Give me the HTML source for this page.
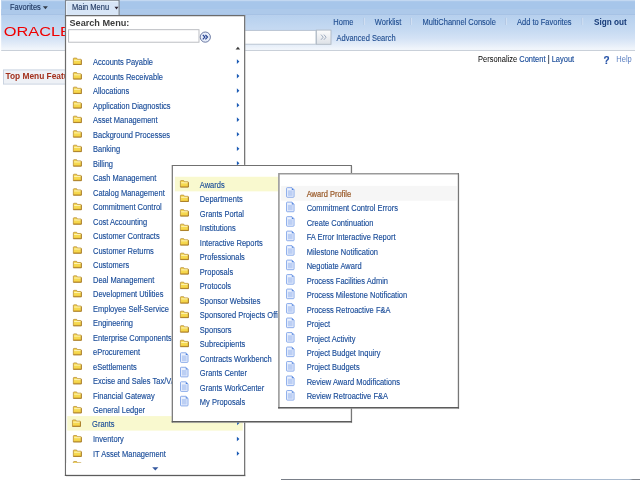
<!DOCTYPE html>
<html><head><meta charset="utf-8"><title>Main Menu</title>
<style>
html,body{margin:0;padding:0;background:#fff;}
body{filter:blur(0.3px);width:640px;height:480px;position:relative;overflow:hidden;font-family:"Liberation Sans",Arial,sans-serif;font-size:7.5px;color:#174a98;}
div,span,a{position:absolute;white-space:nowrap;box-sizing:border-box;}
.layer{position:absolute;left:0;top:0;overflow:hidden}
.t{line-height:15px;height:15px;color:#174a98;transform:scaleY(1.1);transform-origin:0 10px;-webkit-text-stroke:0.12px #174a98;}
.nav{color:#1c4a8e;-webkit-text-stroke:0.1px #1c4a8e;}
.tab{color:#1f3760;-webkit-text-stroke:0.12px #1f3760;}
</style></head><body>

<svg class="layer" width="640" height="480" viewBox="0 0 640 480">
<defs><linearGradient id="hg" x1="0" y1="0" x2="0" y2="1"><stop offset="0" stop-color="#b6d0ee"/><stop offset="0.43" stop-color="#c6daf2"/><stop offset="0.66" stop-color="#d3e2f5"/><stop offset="0.83" stop-color="#e3ecf8"/><stop offset="0.95" stop-color="#eff4fb"/><stop offset="1" stop-color="#f2f6fb"/></linearGradient><linearGradient id="bg" x1="0" y1="0" x2="0" y2="1"><stop offset="0" stop-color="#fcfcfc"/><stop offset="1" stop-color="#dde1e7"/></linearGradient><linearGradient id="sg" x1="0" y1="0" x2="1" y2="0"><stop offset="0" stop-color="#686e78"/><stop offset="0.45" stop-color="#7d8796"/><stop offset="0.8" stop-color="#9db0c8"/><stop offset="0.97" stop-color="#a3b6cc"/><stop offset="0.98" stop-color="#6f7680"/><stop offset="1" stop-color="#6f7680"/></linearGradient></defs>
<rect x="1.2" y="0" width="633.8" height="15.3" fill="#a7c6ea"/>
<rect x="1.2" y="0" width="633.8" height="1.2" fill="#c3d8f1"/>
<rect x="1.2" y="9" width="633.8" height="6" fill="#adc9ea"/>
<rect x="1.2" y="14.7" width="633.8" height="0.8" fill="#97b4da"/>
<rect x="1.2" y="15.3" width="633.8" height="34.7" fill="url(#hg)"/>
<rect x="1.2" y="50" width="633.8" height="1" fill="#c9d0d9"/>
<path d="M42.9 6.3 h5 l-2.5 3 Z" fill="#333c4a"/>
<rect x="200.5" y="30.4" width="115.5" height="13.8" fill="#fff" stroke="#b5c0ce" stroke-width="0.9"/>
<rect x="316.4" y="30.1" width="14.6" height="14.2" fill="url(#bg)" stroke="#b0b9c4" stroke-width="0.9"/>
<path d="M321 34.6 l2.2 2.6 l-2.2 2.6 M323.9 34.6 l2.2 2.6 l-2.2 2.6" fill="none" stroke="#8a9ab3" stroke-width="0.8"/>
<rect x="363.6" y="17.8" width="0.7" height="7.2" fill="#a9bedb"/><rect x="364.3" y="17.8" width="0.7" height="7.2" fill="#dbe6f5"/>
<rect x="410.5" y="17.8" width="0.7" height="7.2" fill="#a9bedb"/><rect x="411.2" y="17.8" width="0.7" height="7.2" fill="#dbe6f5"/>
<rect x="505.2" y="17.8" width="0.7" height="7.2" fill="#a9bedb"/><rect x="505.9" y="17.8" width="0.7" height="7.2" fill="#dbe6f5"/>
<rect x="581.6999999999999" y="17.8" width="0.7" height="7.2" fill="#a9bedb"/><rect x="582.4" y="17.8" width="0.7" height="7.2" fill="#dbe6f5"/>
<rect x="3.5" y="69.9" width="90" height="14.2" fill="#eef1f6" stroke="#c6d0de" stroke-width="0.9"/>
<rect x="281" y="479.1" width="359" height="0.9" fill="url(#sg)"/>
<text x="3.8" y="36" font-family="Liberation Sans, Arial, sans-serif" font-size="11.9" fill="#f00000" textLength="67.2" lengthAdjust="spacingAndGlyphs">ORACLE</text>
</svg>
<div class="t tab" style="left:10px;top:0px">Favorites</div>
<div class="t nav" style="left:333.3px;top:15px">Home</div>
<div class="t nav" style="left:374.8px;top:15px">Worklist</div>
<div class="t nav" style="left:422.5px;top:15px">MultiChannel Console</div>
<div class="t nav" style="left:517px;top:15px">Add to Favorites</div>
<div class="t nav" style="left:594px;top:15px;font-weight:bold;font-size:8.2px;color:#163a78;transform:none;-webkit-text-stroke:0">Sign out</div>
<div class="t nav" style="left:336.5px;top:31px">Advanced Search</div>
<div class="t " style="left:478px;top:52px"><span style="position:static;color:#000;-webkit-text-stroke:0">Personalize </span>Content<span style="position:static;color:#000"> | </span>Layout</div>
<div class="t " style="left:603.6px;top:53px;font-weight:bold;font-size:10px;color:#2450a8">?</div>
<div class="t " style="left:616.3px;top:52px;color:#5b7fc0;-webkit-text-stroke:0">Help</div>
<div class="t " style="left:5.5px;top:69px;font-weight:bold;font-size:8.35px;color:#a3301c;-webkit-text-stroke:0;transform:none">Top Menu Features Description</div>
<svg class="layer" width="640" height="480" viewBox="0 0 640 480">
<rect x="65.5" y="0.35" width="53.6" height="16" fill="#d7e5f6" stroke="#7f858d" stroke-width="1.1"/>
<path d="M66.6 15 V1.3 H118" fill="none" stroke="#eef5fd" stroke-width="0.8"/>
<path d="M114.5 6.8 h4 l-2 2.8 Z" fill="#2a2230"/>
<rect x="65.90" y="16.20" width="179.70" height="460.50" fill="#000" opacity="0.13"/><rect x="64.90" y="15.00" width="180.30" height="461.10" fill="#fff"/><path d="M65.50 476.10 V15.60 H245.20" fill="none" stroke="#6c6c6c" stroke-width="1.2"/><path d="M244.60 15.00 V476.10" stroke="#777" stroke-width="1.2"/><path d="M64.90 475.40 H245.20" stroke="#5c5c5c" stroke-width="1.4"/>
<rect x="68.6" y="29.7" width="130.4" height="12.5" fill="#fff" stroke="#b4b7bc" stroke-width="0.9"/>
<g transform="translate(199.3 31.1)"><circle cx="6" cy="6" r="5.1" fill="#e9effb" stroke="#5b6b98" stroke-width="0.9"/><path d="M3.5 3.7 L5.6 6 L3.5 8.3 M6.1 3.7 L8.2 6 L6.1 8.3" fill="none" stroke="#2a4694" stroke-width="1.25"/></g>
<path d="M235.6 49.5 h4.6 l-2.3 -2.8 Z" fill="#3a3a3a"/>
<path d="M152.2 467.2 h6.2 l-3.1 3.3 Z" fill="#35589f"/>
<g transform="translate(72.95 57.70)"><path d="M0.4 1.0 Q0.4 0.4 1.0 0.4 L3.7 0.4 L4.4 1.6 L7.8 1.6 Q8.4 1.6 8.4 2.2 L8.4 6.8 L0.4 6.8 Z" fill="#f6d94f" stroke="#b58a36" stroke-width="0.75"/><path d="M1.2 2.6 H7.6" stroke="#fff6c4" stroke-width="0.9"/><path d="M0.9 6.1 H7.9" stroke="#ecc238" stroke-width="0.8"/><path d="M0.4 6.8 H8.4 V2.2" fill="none" stroke="#a17623" stroke-width="0.75"/></g>
<path transform="translate(236.70 59.30)" d="M0.2 0 L2.7 2.3 L0.2 4.6 Z" fill="#1b5bb5"/>
<g transform="translate(72.95 72.22)"><path d="M0.4 1.0 Q0.4 0.4 1.0 0.4 L3.7 0.4 L4.4 1.6 L7.8 1.6 Q8.4 1.6 8.4 2.2 L8.4 6.8 L0.4 6.8 Z" fill="#f6d94f" stroke="#b58a36" stroke-width="0.75"/><path d="M1.2 2.6 H7.6" stroke="#fff6c4" stroke-width="0.9"/><path d="M0.9 6.1 H7.9" stroke="#ecc238" stroke-width="0.8"/><path d="M0.4 6.8 H8.4 V2.2" fill="none" stroke="#a17623" stroke-width="0.75"/></g>
<path transform="translate(236.70 73.82)" d="M0.2 0 L2.7 2.3 L0.2 4.6 Z" fill="#1b5bb5"/>
<g transform="translate(72.95 86.73)"><path d="M0.4 1.0 Q0.4 0.4 1.0 0.4 L3.7 0.4 L4.4 1.6 L7.8 1.6 Q8.4 1.6 8.4 2.2 L8.4 6.8 L0.4 6.8 Z" fill="#f6d94f" stroke="#b58a36" stroke-width="0.75"/><path d="M1.2 2.6 H7.6" stroke="#fff6c4" stroke-width="0.9"/><path d="M0.9 6.1 H7.9" stroke="#ecc238" stroke-width="0.8"/><path d="M0.4 6.8 H8.4 V2.2" fill="none" stroke="#a17623" stroke-width="0.75"/></g>
<path transform="translate(236.70 88.33)" d="M0.2 0 L2.7 2.3 L0.2 4.6 Z" fill="#1b5bb5"/>
<g transform="translate(72.95 101.25)"><path d="M0.4 1.0 Q0.4 0.4 1.0 0.4 L3.7 0.4 L4.4 1.6 L7.8 1.6 Q8.4 1.6 8.4 2.2 L8.4 6.8 L0.4 6.8 Z" fill="#f6d94f" stroke="#b58a36" stroke-width="0.75"/><path d="M1.2 2.6 H7.6" stroke="#fff6c4" stroke-width="0.9"/><path d="M0.9 6.1 H7.9" stroke="#ecc238" stroke-width="0.8"/><path d="M0.4 6.8 H8.4 V2.2" fill="none" stroke="#a17623" stroke-width="0.75"/></g>
<path transform="translate(236.70 102.85)" d="M0.2 0 L2.7 2.3 L0.2 4.6 Z" fill="#1b5bb5"/>
<g transform="translate(72.95 115.76)"><path d="M0.4 1.0 Q0.4 0.4 1.0 0.4 L3.7 0.4 L4.4 1.6 L7.8 1.6 Q8.4 1.6 8.4 2.2 L8.4 6.8 L0.4 6.8 Z" fill="#f6d94f" stroke="#b58a36" stroke-width="0.75"/><path d="M1.2 2.6 H7.6" stroke="#fff6c4" stroke-width="0.9"/><path d="M0.9 6.1 H7.9" stroke="#ecc238" stroke-width="0.8"/><path d="M0.4 6.8 H8.4 V2.2" fill="none" stroke="#a17623" stroke-width="0.75"/></g>
<path transform="translate(236.70 117.36)" d="M0.2 0 L2.7 2.3 L0.2 4.6 Z" fill="#1b5bb5"/>
<g transform="translate(72.95 130.28)"><path d="M0.4 1.0 Q0.4 0.4 1.0 0.4 L3.7 0.4 L4.4 1.6 L7.8 1.6 Q8.4 1.6 8.4 2.2 L8.4 6.8 L0.4 6.8 Z" fill="#f6d94f" stroke="#b58a36" stroke-width="0.75"/><path d="M1.2 2.6 H7.6" stroke="#fff6c4" stroke-width="0.9"/><path d="M0.9 6.1 H7.9" stroke="#ecc238" stroke-width="0.8"/><path d="M0.4 6.8 H8.4 V2.2" fill="none" stroke="#a17623" stroke-width="0.75"/></g>
<path transform="translate(236.70 131.88)" d="M0.2 0 L2.7 2.3 L0.2 4.6 Z" fill="#1b5bb5"/>
<g transform="translate(72.95 144.79)"><path d="M0.4 1.0 Q0.4 0.4 1.0 0.4 L3.7 0.4 L4.4 1.6 L7.8 1.6 Q8.4 1.6 8.4 2.2 L8.4 6.8 L0.4 6.8 Z" fill="#f6d94f" stroke="#b58a36" stroke-width="0.75"/><path d="M1.2 2.6 H7.6" stroke="#fff6c4" stroke-width="0.9"/><path d="M0.9 6.1 H7.9" stroke="#ecc238" stroke-width="0.8"/><path d="M0.4 6.8 H8.4 V2.2" fill="none" stroke="#a17623" stroke-width="0.75"/></g>
<path transform="translate(236.70 146.39)" d="M0.2 0 L2.7 2.3 L0.2 4.6 Z" fill="#1b5bb5"/>
<g transform="translate(72.95 159.31)"><path d="M0.4 1.0 Q0.4 0.4 1.0 0.4 L3.7 0.4 L4.4 1.6 L7.8 1.6 Q8.4 1.6 8.4 2.2 L8.4 6.8 L0.4 6.8 Z" fill="#f6d94f" stroke="#b58a36" stroke-width="0.75"/><path d="M1.2 2.6 H7.6" stroke="#fff6c4" stroke-width="0.9"/><path d="M0.9 6.1 H7.9" stroke="#ecc238" stroke-width="0.8"/><path d="M0.4 6.8 H8.4 V2.2" fill="none" stroke="#a17623" stroke-width="0.75"/></g>
<path transform="translate(236.70 160.91)" d="M0.2 0 L2.7 2.3 L0.2 4.6 Z" fill="#1b5bb5"/>
<g transform="translate(72.95 173.82)"><path d="M0.4 1.0 Q0.4 0.4 1.0 0.4 L3.7 0.4 L4.4 1.6 L7.8 1.6 Q8.4 1.6 8.4 2.2 L8.4 6.8 L0.4 6.8 Z" fill="#f6d94f" stroke="#b58a36" stroke-width="0.75"/><path d="M1.2 2.6 H7.6" stroke="#fff6c4" stroke-width="0.9"/><path d="M0.9 6.1 H7.9" stroke="#ecc238" stroke-width="0.8"/><path d="M0.4 6.8 H8.4 V2.2" fill="none" stroke="#a17623" stroke-width="0.75"/></g>
<path transform="translate(236.70 175.42)" d="M0.2 0 L2.7 2.3 L0.2 4.6 Z" fill="#1b5bb5"/>
<g transform="translate(72.95 188.34)"><path d="M0.4 1.0 Q0.4 0.4 1.0 0.4 L3.7 0.4 L4.4 1.6 L7.8 1.6 Q8.4 1.6 8.4 2.2 L8.4 6.8 L0.4 6.8 Z" fill="#f6d94f" stroke="#b58a36" stroke-width="0.75"/><path d="M1.2 2.6 H7.6" stroke="#fff6c4" stroke-width="0.9"/><path d="M0.9 6.1 H7.9" stroke="#ecc238" stroke-width="0.8"/><path d="M0.4 6.8 H8.4 V2.2" fill="none" stroke="#a17623" stroke-width="0.75"/></g>
<path transform="translate(236.70 189.94)" d="M0.2 0 L2.7 2.3 L0.2 4.6 Z" fill="#1b5bb5"/>
<g transform="translate(72.95 202.85)"><path d="M0.4 1.0 Q0.4 0.4 1.0 0.4 L3.7 0.4 L4.4 1.6 L7.8 1.6 Q8.4 1.6 8.4 2.2 L8.4 6.8 L0.4 6.8 Z" fill="#f6d94f" stroke="#b58a36" stroke-width="0.75"/><path d="M1.2 2.6 H7.6" stroke="#fff6c4" stroke-width="0.9"/><path d="M0.9 6.1 H7.9" stroke="#ecc238" stroke-width="0.8"/><path d="M0.4 6.8 H8.4 V2.2" fill="none" stroke="#a17623" stroke-width="0.75"/></g>
<path transform="translate(236.70 204.45)" d="M0.2 0 L2.7 2.3 L0.2 4.6 Z" fill="#1b5bb5"/>
<g transform="translate(72.95 217.37)"><path d="M0.4 1.0 Q0.4 0.4 1.0 0.4 L3.7 0.4 L4.4 1.6 L7.8 1.6 Q8.4 1.6 8.4 2.2 L8.4 6.8 L0.4 6.8 Z" fill="#f6d94f" stroke="#b58a36" stroke-width="0.75"/><path d="M1.2 2.6 H7.6" stroke="#fff6c4" stroke-width="0.9"/><path d="M0.9 6.1 H7.9" stroke="#ecc238" stroke-width="0.8"/><path d="M0.4 6.8 H8.4 V2.2" fill="none" stroke="#a17623" stroke-width="0.75"/></g>
<path transform="translate(236.70 218.97)" d="M0.2 0 L2.7 2.3 L0.2 4.6 Z" fill="#1b5bb5"/>
<g transform="translate(72.95 231.88)"><path d="M0.4 1.0 Q0.4 0.4 1.0 0.4 L3.7 0.4 L4.4 1.6 L7.8 1.6 Q8.4 1.6 8.4 2.2 L8.4 6.8 L0.4 6.8 Z" fill="#f6d94f" stroke="#b58a36" stroke-width="0.75"/><path d="M1.2 2.6 H7.6" stroke="#fff6c4" stroke-width="0.9"/><path d="M0.9 6.1 H7.9" stroke="#ecc238" stroke-width="0.8"/><path d="M0.4 6.8 H8.4 V2.2" fill="none" stroke="#a17623" stroke-width="0.75"/></g>
<path transform="translate(236.70 233.48)" d="M0.2 0 L2.7 2.3 L0.2 4.6 Z" fill="#1b5bb5"/>
<g transform="translate(72.95 246.40)"><path d="M0.4 1.0 Q0.4 0.4 1.0 0.4 L3.7 0.4 L4.4 1.6 L7.8 1.6 Q8.4 1.6 8.4 2.2 L8.4 6.8 L0.4 6.8 Z" fill="#f6d94f" stroke="#b58a36" stroke-width="0.75"/><path d="M1.2 2.6 H7.6" stroke="#fff6c4" stroke-width="0.9"/><path d="M0.9 6.1 H7.9" stroke="#ecc238" stroke-width="0.8"/><path d="M0.4 6.8 H8.4 V2.2" fill="none" stroke="#a17623" stroke-width="0.75"/></g>
<path transform="translate(236.70 248.00)" d="M0.2 0 L2.7 2.3 L0.2 4.6 Z" fill="#1b5bb5"/>
<g transform="translate(72.95 260.91)"><path d="M0.4 1.0 Q0.4 0.4 1.0 0.4 L3.7 0.4 L4.4 1.6 L7.8 1.6 Q8.4 1.6 8.4 2.2 L8.4 6.8 L0.4 6.8 Z" fill="#f6d94f" stroke="#b58a36" stroke-width="0.75"/><path d="M1.2 2.6 H7.6" stroke="#fff6c4" stroke-width="0.9"/><path d="M0.9 6.1 H7.9" stroke="#ecc238" stroke-width="0.8"/><path d="M0.4 6.8 H8.4 V2.2" fill="none" stroke="#a17623" stroke-width="0.75"/></g>
<path transform="translate(236.70 262.51)" d="M0.2 0 L2.7 2.3 L0.2 4.6 Z" fill="#1b5bb5"/>
<g transform="translate(72.95 275.43)"><path d="M0.4 1.0 Q0.4 0.4 1.0 0.4 L3.7 0.4 L4.4 1.6 L7.8 1.6 Q8.4 1.6 8.4 2.2 L8.4 6.8 L0.4 6.8 Z" fill="#f6d94f" stroke="#b58a36" stroke-width="0.75"/><path d="M1.2 2.6 H7.6" stroke="#fff6c4" stroke-width="0.9"/><path d="M0.9 6.1 H7.9" stroke="#ecc238" stroke-width="0.8"/><path d="M0.4 6.8 H8.4 V2.2" fill="none" stroke="#a17623" stroke-width="0.75"/></g>
<path transform="translate(236.70 277.02)" d="M0.2 0 L2.7 2.3 L0.2 4.6 Z" fill="#1b5bb5"/>
<g transform="translate(72.95 289.94)"><path d="M0.4 1.0 Q0.4 0.4 1.0 0.4 L3.7 0.4 L4.4 1.6 L7.8 1.6 Q8.4 1.6 8.4 2.2 L8.4 6.8 L0.4 6.8 Z" fill="#f6d94f" stroke="#b58a36" stroke-width="0.75"/><path d="M1.2 2.6 H7.6" stroke="#fff6c4" stroke-width="0.9"/><path d="M0.9 6.1 H7.9" stroke="#ecc238" stroke-width="0.8"/><path d="M0.4 6.8 H8.4 V2.2" fill="none" stroke="#a17623" stroke-width="0.75"/></g>
<path transform="translate(236.70 291.54)" d="M0.2 0 L2.7 2.3 L0.2 4.6 Z" fill="#1b5bb5"/>
<g transform="translate(72.95 304.45)"><path d="M0.4 1.0 Q0.4 0.4 1.0 0.4 L3.7 0.4 L4.4 1.6 L7.8 1.6 Q8.4 1.6 8.4 2.2 L8.4 6.8 L0.4 6.8 Z" fill="#f6d94f" stroke="#b58a36" stroke-width="0.75"/><path d="M1.2 2.6 H7.6" stroke="#fff6c4" stroke-width="0.9"/><path d="M0.9 6.1 H7.9" stroke="#ecc238" stroke-width="0.8"/><path d="M0.4 6.8 H8.4 V2.2" fill="none" stroke="#a17623" stroke-width="0.75"/></g>
<path transform="translate(236.70 306.05)" d="M0.2 0 L2.7 2.3 L0.2 4.6 Z" fill="#1b5bb5"/>
<g transform="translate(72.95 318.97)"><path d="M0.4 1.0 Q0.4 0.4 1.0 0.4 L3.7 0.4 L4.4 1.6 L7.8 1.6 Q8.4 1.6 8.4 2.2 L8.4 6.8 L0.4 6.8 Z" fill="#f6d94f" stroke="#b58a36" stroke-width="0.75"/><path d="M1.2 2.6 H7.6" stroke="#fff6c4" stroke-width="0.9"/><path d="M0.9 6.1 H7.9" stroke="#ecc238" stroke-width="0.8"/><path d="M0.4 6.8 H8.4 V2.2" fill="none" stroke="#a17623" stroke-width="0.75"/></g>
<path transform="translate(236.70 320.57)" d="M0.2 0 L2.7 2.3 L0.2 4.6 Z" fill="#1b5bb5"/>
<g transform="translate(72.95 333.49)"><path d="M0.4 1.0 Q0.4 0.4 1.0 0.4 L3.7 0.4 L4.4 1.6 L7.8 1.6 Q8.4 1.6 8.4 2.2 L8.4 6.8 L0.4 6.8 Z" fill="#f6d94f" stroke="#b58a36" stroke-width="0.75"/><path d="M1.2 2.6 H7.6" stroke="#fff6c4" stroke-width="0.9"/><path d="M0.9 6.1 H7.9" stroke="#ecc238" stroke-width="0.8"/><path d="M0.4 6.8 H8.4 V2.2" fill="none" stroke="#a17623" stroke-width="0.75"/></g>
<path transform="translate(236.70 335.09)" d="M0.2 0 L2.7 2.3 L0.2 4.6 Z" fill="#1b5bb5"/>
<g transform="translate(72.95 348.00)"><path d="M0.4 1.0 Q0.4 0.4 1.0 0.4 L3.7 0.4 L4.4 1.6 L7.8 1.6 Q8.4 1.6 8.4 2.2 L8.4 6.8 L0.4 6.8 Z" fill="#f6d94f" stroke="#b58a36" stroke-width="0.75"/><path d="M1.2 2.6 H7.6" stroke="#fff6c4" stroke-width="0.9"/><path d="M0.9 6.1 H7.9" stroke="#ecc238" stroke-width="0.8"/><path d="M0.4 6.8 H8.4 V2.2" fill="none" stroke="#a17623" stroke-width="0.75"/></g>
<path transform="translate(236.70 349.60)" d="M0.2 0 L2.7 2.3 L0.2 4.6 Z" fill="#1b5bb5"/>
<g transform="translate(72.95 362.52)"><path d="M0.4 1.0 Q0.4 0.4 1.0 0.4 L3.7 0.4 L4.4 1.6 L7.8 1.6 Q8.4 1.6 8.4 2.2 L8.4 6.8 L0.4 6.8 Z" fill="#f6d94f" stroke="#b58a36" stroke-width="0.75"/><path d="M1.2 2.6 H7.6" stroke="#fff6c4" stroke-width="0.9"/><path d="M0.9 6.1 H7.9" stroke="#ecc238" stroke-width="0.8"/><path d="M0.4 6.8 H8.4 V2.2" fill="none" stroke="#a17623" stroke-width="0.75"/></g>
<path transform="translate(236.70 364.12)" d="M0.2 0 L2.7 2.3 L0.2 4.6 Z" fill="#1b5bb5"/>
<g transform="translate(72.95 377.03)"><path d="M0.4 1.0 Q0.4 0.4 1.0 0.4 L3.7 0.4 L4.4 1.6 L7.8 1.6 Q8.4 1.6 8.4 2.2 L8.4 6.8 L0.4 6.8 Z" fill="#f6d94f" stroke="#b58a36" stroke-width="0.75"/><path d="M1.2 2.6 H7.6" stroke="#fff6c4" stroke-width="0.9"/><path d="M0.9 6.1 H7.9" stroke="#ecc238" stroke-width="0.8"/><path d="M0.4 6.8 H8.4 V2.2" fill="none" stroke="#a17623" stroke-width="0.75"/></g>
<path transform="translate(236.70 378.63)" d="M0.2 0 L2.7 2.3 L0.2 4.6 Z" fill="#1b5bb5"/>
<g transform="translate(72.95 391.55)"><path d="M0.4 1.0 Q0.4 0.4 1.0 0.4 L3.7 0.4 L4.4 1.6 L7.8 1.6 Q8.4 1.6 8.4 2.2 L8.4 6.8 L0.4 6.8 Z" fill="#f6d94f" stroke="#b58a36" stroke-width="0.75"/><path d="M1.2 2.6 H7.6" stroke="#fff6c4" stroke-width="0.9"/><path d="M0.9 6.1 H7.9" stroke="#ecc238" stroke-width="0.8"/><path d="M0.4 6.8 H8.4 V2.2" fill="none" stroke="#a17623" stroke-width="0.75"/></g>
<path transform="translate(236.70 393.14)" d="M0.2 0 L2.7 2.3 L0.2 4.6 Z" fill="#1b5bb5"/>
<g transform="translate(72.95 406.06)"><path d="M0.4 1.0 Q0.4 0.4 1.0 0.4 L3.7 0.4 L4.4 1.6 L7.8 1.6 Q8.4 1.6 8.4 2.2 L8.4 6.8 L0.4 6.8 Z" fill="#f6d94f" stroke="#b58a36" stroke-width="0.75"/><path d="M1.2 2.6 H7.6" stroke="#fff6c4" stroke-width="0.9"/><path d="M0.9 6.1 H7.9" stroke="#ecc238" stroke-width="0.8"/><path d="M0.4 6.8 H8.4 V2.2" fill="none" stroke="#a17623" stroke-width="0.75"/></g>
<path transform="translate(236.70 407.66)" d="M0.2 0 L2.7 2.3 L0.2 4.6 Z" fill="#1b5bb5"/>
<rect x="67.25" y="416.1" width="175.5" height="14.5" fill="#f9f9cf"/>
<g transform="translate(72.05 419.57)"><path d="M0.4 1.0 Q0.4 0.4 1.0 0.4 L3.7 0.4 L4.4 1.6 L7.8 1.6 Q8.4 1.6 8.4 2.2 L8.4 6.8 L0.4 6.8 Z" fill="#f6d94f" stroke="#b58a36" stroke-width="0.75"/><path d="M1.2 2.6 H7.6" stroke="#fff6c4" stroke-width="0.9"/><path d="M0.9 6.1 H7.9" stroke="#ecc238" stroke-width="0.8"/><path d="M0.4 6.8 H8.4 V2.2" fill="none" stroke="#a17623" stroke-width="0.75"/></g>
<path transform="translate(236.90 420.57)" d="M0.2 0 L2.7 2.3 L0.2 4.6 Z" fill="#1b5bb5"/>
<g transform="translate(72.95 435.09)"><path d="M0.4 1.0 Q0.4 0.4 1.0 0.4 L3.7 0.4 L4.4 1.6 L7.8 1.6 Q8.4 1.6 8.4 2.2 L8.4 6.8 L0.4 6.8 Z" fill="#f6d94f" stroke="#b58a36" stroke-width="0.75"/><path d="M1.2 2.6 H7.6" stroke="#fff6c4" stroke-width="0.9"/><path d="M0.9 6.1 H7.9" stroke="#ecc238" stroke-width="0.8"/><path d="M0.4 6.8 H8.4 V2.2" fill="none" stroke="#a17623" stroke-width="0.75"/></g>
<path transform="translate(236.70 436.69)" d="M0.2 0 L2.7 2.3 L0.2 4.6 Z" fill="#1b5bb5"/>
<g transform="translate(72.95 449.61)"><path d="M0.4 1.0 Q0.4 0.4 1.0 0.4 L3.7 0.4 L4.4 1.6 L7.8 1.6 Q8.4 1.6 8.4 2.2 L8.4 6.8 L0.4 6.8 Z" fill="#f6d94f" stroke="#b58a36" stroke-width="0.75"/><path d="M1.2 2.6 H7.6" stroke="#fff6c4" stroke-width="0.9"/><path d="M0.9 6.1 H7.9" stroke="#ecc238" stroke-width="0.8"/><path d="M0.4 6.8 H8.4 V2.2" fill="none" stroke="#a17623" stroke-width="0.75"/></g>
<path transform="translate(236.70 451.21)" d="M0.2 0 L2.7 2.3 L0.2 4.6 Z" fill="#1b5bb5"/>
<g transform="translate(72.95 461.20)"><path d="M0.4 1.0 Q0.4 0.4 1.0 0.4 L3.7 0.4 L4.4 1.6 L7.8 1.6 Q8.4 1.6 8.4 2.2 L8.4 6.8 L0.4 6.8 Z" fill="#f6d94f" stroke="#b58a36" stroke-width="0.75"/><path d="M1.2 2.6 H7.6" stroke="#fff6c4" stroke-width="0.9"/><path d="M0.9 6.1 H7.9" stroke="#ecc238" stroke-width="0.8"/><path d="M0.4 6.8 H8.4 V2.2" fill="none" stroke="#a17623" stroke-width="0.75"/></g>
<rect x="66.2" y="462.9" width="177.8" height="11.5" fill="#fff"/>
<path d="M152.2 467.2 h6.2 l-3.1 3.3 Z" fill="#35589f"/>
</svg>
<div class="t tab" style="left:72px;top:0px">Main Menu</div>
<div class="t " style="left:69.5px;top:16px;font-weight:bold;font-size:9.15px;color:#3c3c3c;-webkit-text-stroke:0;transform:none">Search Menu:</div>
<div class="t " style="left:93px;top:55px">Accounts Payable</div>
<div class="t " style="left:93px;top:70px">Accounts Receivable</div>
<div class="t " style="left:93px;top:84px">Allocations</div>
<div class="t " style="left:93px;top:99px">Application Diagnostics</div>
<div class="t " style="left:93px;top:113px">Asset Management</div>
<div class="t " style="left:93px;top:128px">Background Processes</div>
<div class="t " style="left:93px;top:142px">Banking</div>
<div class="t " style="left:93px;top:157px">Billing</div>
<div class="t " style="left:93px;top:171px">Cash Management</div>
<div class="t " style="left:93px;top:186px">Catalog Management</div>
<div class="t " style="left:93px;top:200px">Commitment Control</div>
<div class="t " style="left:93px;top:215px">Cost Accounting</div>
<div class="t " style="left:93px;top:229px">Customer Contracts</div>
<div class="t " style="left:93px;top:244px">Customer Returns</div>
<div class="t " style="left:93px;top:258px">Customers</div>
<div class="t " style="left:93px;top:273px">Deal Management</div>
<div class="t " style="left:93px;top:287px">Development Utilities</div>
<div class="t " style="left:93px;top:302px">Employee Self-Service</div>
<div class="t " style="left:93px;top:316px">Engineering</div>
<div class="t " style="left:93px;top:331px">Enterprise Components</div>
<div class="t " style="left:93px;top:345px">eProcurement</div>
<div class="t " style="left:93px;top:360px">eSettlements</div>
<div class="t " style="left:93px;top:374px">Excise and Sales Tax/VAT</div>
<div class="t " style="left:93px;top:389px">Financial Gateway</div>
<div class="t " style="left:93px;top:403px">General Ledger</div>
<div class="t " style="left:92.1px;top:417px">Grants</div>
<div class="t " style="left:93px;top:432px">Inventory</div>
<div class="t " style="left:93px;top:447px">IT Asset Management</div>
<svg class="layer" width="640" height="480" viewBox="0 0 640 480">
<rect x="172.70" y="166.10" width="179.70" height="257.00" fill="#000" opacity="0.13"/><rect x="171.70" y="164.90" width="180.30" height="257.60" fill="#fff"/><path d="M172.30 422.50 V165.50 H352.00" fill="none" stroke="#707070" stroke-width="1.2"/><path d="M351.40 164.90 V422.50" stroke="#777" stroke-width="1.2"/><path d="M171.70 421.80 H352.00" stroke="#5c5c5c" stroke-width="1.4"/>
<rect x="174.9" y="176.75" width="174.6" height="14.6" fill="#f9f9cf"/>
<g transform="translate(180.00 180.20)"><path d="M0.4 1.0 Q0.4 0.4 1.0 0.4 L3.7 0.4 L4.4 1.6 L7.8 1.6 Q8.4 1.6 8.4 2.2 L8.4 6.8 L0.4 6.8 Z" fill="#f6d94f" stroke="#b58a36" stroke-width="0.75"/><path d="M1.2 2.6 H7.6" stroke="#fff6c4" stroke-width="0.9"/><path d="M0.9 6.1 H7.9" stroke="#ecc238" stroke-width="0.8"/><path d="M0.4 6.8 H8.4 V2.2" fill="none" stroke="#a17623" stroke-width="0.75"/></g>
<g transform="translate(180.00 194.71)"><path d="M0.4 1.0 Q0.4 0.4 1.0 0.4 L3.7 0.4 L4.4 1.6 L7.8 1.6 Q8.4 1.6 8.4 2.2 L8.4 6.8 L0.4 6.8 Z" fill="#f6d94f" stroke="#b58a36" stroke-width="0.75"/><path d="M1.2 2.6 H7.6" stroke="#fff6c4" stroke-width="0.9"/><path d="M0.9 6.1 H7.9" stroke="#ecc238" stroke-width="0.8"/><path d="M0.4 6.8 H8.4 V2.2" fill="none" stroke="#a17623" stroke-width="0.75"/></g>
<g transform="translate(180.00 209.22)"><path d="M0.4 1.0 Q0.4 0.4 1.0 0.4 L3.7 0.4 L4.4 1.6 L7.8 1.6 Q8.4 1.6 8.4 2.2 L8.4 6.8 L0.4 6.8 Z" fill="#f6d94f" stroke="#b58a36" stroke-width="0.75"/><path d="M1.2 2.6 H7.6" stroke="#fff6c4" stroke-width="0.9"/><path d="M0.9 6.1 H7.9" stroke="#ecc238" stroke-width="0.8"/><path d="M0.4 6.8 H8.4 V2.2" fill="none" stroke="#a17623" stroke-width="0.75"/></g>
<g transform="translate(180.00 223.73)"><path d="M0.4 1.0 Q0.4 0.4 1.0 0.4 L3.7 0.4 L4.4 1.6 L7.8 1.6 Q8.4 1.6 8.4 2.2 L8.4 6.8 L0.4 6.8 Z" fill="#f6d94f" stroke="#b58a36" stroke-width="0.75"/><path d="M1.2 2.6 H7.6" stroke="#fff6c4" stroke-width="0.9"/><path d="M0.9 6.1 H7.9" stroke="#ecc238" stroke-width="0.8"/><path d="M0.4 6.8 H8.4 V2.2" fill="none" stroke="#a17623" stroke-width="0.75"/></g>
<g transform="translate(180.00 238.24)"><path d="M0.4 1.0 Q0.4 0.4 1.0 0.4 L3.7 0.4 L4.4 1.6 L7.8 1.6 Q8.4 1.6 8.4 2.2 L8.4 6.8 L0.4 6.8 Z" fill="#f6d94f" stroke="#b58a36" stroke-width="0.75"/><path d="M1.2 2.6 H7.6" stroke="#fff6c4" stroke-width="0.9"/><path d="M0.9 6.1 H7.9" stroke="#ecc238" stroke-width="0.8"/><path d="M0.4 6.8 H8.4 V2.2" fill="none" stroke="#a17623" stroke-width="0.75"/></g>
<g transform="translate(180.00 252.75)"><path d="M0.4 1.0 Q0.4 0.4 1.0 0.4 L3.7 0.4 L4.4 1.6 L7.8 1.6 Q8.4 1.6 8.4 2.2 L8.4 6.8 L0.4 6.8 Z" fill="#f6d94f" stroke="#b58a36" stroke-width="0.75"/><path d="M1.2 2.6 H7.6" stroke="#fff6c4" stroke-width="0.9"/><path d="M0.9 6.1 H7.9" stroke="#ecc238" stroke-width="0.8"/><path d="M0.4 6.8 H8.4 V2.2" fill="none" stroke="#a17623" stroke-width="0.75"/></g>
<g transform="translate(180.00 267.26)"><path d="M0.4 1.0 Q0.4 0.4 1.0 0.4 L3.7 0.4 L4.4 1.6 L7.8 1.6 Q8.4 1.6 8.4 2.2 L8.4 6.8 L0.4 6.8 Z" fill="#f6d94f" stroke="#b58a36" stroke-width="0.75"/><path d="M1.2 2.6 H7.6" stroke="#fff6c4" stroke-width="0.9"/><path d="M0.9 6.1 H7.9" stroke="#ecc238" stroke-width="0.8"/><path d="M0.4 6.8 H8.4 V2.2" fill="none" stroke="#a17623" stroke-width="0.75"/></g>
<g transform="translate(180.00 281.77)"><path d="M0.4 1.0 Q0.4 0.4 1.0 0.4 L3.7 0.4 L4.4 1.6 L7.8 1.6 Q8.4 1.6 8.4 2.2 L8.4 6.8 L0.4 6.8 Z" fill="#f6d94f" stroke="#b58a36" stroke-width="0.75"/><path d="M1.2 2.6 H7.6" stroke="#fff6c4" stroke-width="0.9"/><path d="M0.9 6.1 H7.9" stroke="#ecc238" stroke-width="0.8"/><path d="M0.4 6.8 H8.4 V2.2" fill="none" stroke="#a17623" stroke-width="0.75"/></g>
<g transform="translate(180.00 296.28)"><path d="M0.4 1.0 Q0.4 0.4 1.0 0.4 L3.7 0.4 L4.4 1.6 L7.8 1.6 Q8.4 1.6 8.4 2.2 L8.4 6.8 L0.4 6.8 Z" fill="#f6d94f" stroke="#b58a36" stroke-width="0.75"/><path d="M1.2 2.6 H7.6" stroke="#fff6c4" stroke-width="0.9"/><path d="M0.9 6.1 H7.9" stroke="#ecc238" stroke-width="0.8"/><path d="M0.4 6.8 H8.4 V2.2" fill="none" stroke="#a17623" stroke-width="0.75"/></g>
<g transform="translate(180.00 310.79)"><path d="M0.4 1.0 Q0.4 0.4 1.0 0.4 L3.7 0.4 L4.4 1.6 L7.8 1.6 Q8.4 1.6 8.4 2.2 L8.4 6.8 L0.4 6.8 Z" fill="#f6d94f" stroke="#b58a36" stroke-width="0.75"/><path d="M1.2 2.6 H7.6" stroke="#fff6c4" stroke-width="0.9"/><path d="M0.9 6.1 H7.9" stroke="#ecc238" stroke-width="0.8"/><path d="M0.4 6.8 H8.4 V2.2" fill="none" stroke="#a17623" stroke-width="0.75"/></g>
<g transform="translate(180.00 325.30)"><path d="M0.4 1.0 Q0.4 0.4 1.0 0.4 L3.7 0.4 L4.4 1.6 L7.8 1.6 Q8.4 1.6 8.4 2.2 L8.4 6.8 L0.4 6.8 Z" fill="#f6d94f" stroke="#b58a36" stroke-width="0.75"/><path d="M1.2 2.6 H7.6" stroke="#fff6c4" stroke-width="0.9"/><path d="M0.9 6.1 H7.9" stroke="#ecc238" stroke-width="0.8"/><path d="M0.4 6.8 H8.4 V2.2" fill="none" stroke="#a17623" stroke-width="0.75"/></g>
<g transform="translate(180.00 339.81)"><path d="M0.4 1.0 Q0.4 0.4 1.0 0.4 L3.7 0.4 L4.4 1.6 L7.8 1.6 Q8.4 1.6 8.4 2.2 L8.4 6.8 L0.4 6.8 Z" fill="#f6d94f" stroke="#b58a36" stroke-width="0.75"/><path d="M1.2 2.6 H7.6" stroke="#fff6c4" stroke-width="0.9"/><path d="M0.9 6.1 H7.9" stroke="#ecc238" stroke-width="0.8"/><path d="M0.4 6.8 H8.4 V2.2" fill="none" stroke="#a17623" stroke-width="0.75"/></g>
<g transform="translate(180.05 352.32)"><path d="M0.45 1.2 Q0.45 0.45 1.2 0.45 L5.9 0.45 L7.95 2.5 L7.95 9.3 Q7.95 10.05 7.2 10.05 L1.2 10.05 Q0.45 10.05 0.45 9.3 Z" fill="#edf2fd" stroke="#7199e6" stroke-width="0.8"/><rect x="1.8" y="3.1" width="4.8" height="5.6" fill="#bccff4"/><path d="M5.7 0.6 L7.8 2.7 L5.7 2.7 Z" fill="#4c80dc"/></g>
<g transform="translate(180.05 366.83)"><path d="M0.45 1.2 Q0.45 0.45 1.2 0.45 L5.9 0.45 L7.95 2.5 L7.95 9.3 Q7.95 10.05 7.2 10.05 L1.2 10.05 Q0.45 10.05 0.45 9.3 Z" fill="#edf2fd" stroke="#7199e6" stroke-width="0.8"/><rect x="1.8" y="3.1" width="4.8" height="5.6" fill="#bccff4"/><path d="M5.7 0.6 L7.8 2.7 L5.7 2.7 Z" fill="#4c80dc"/></g>
<g transform="translate(180.05 381.34)"><path d="M0.45 1.2 Q0.45 0.45 1.2 0.45 L5.9 0.45 L7.95 2.5 L7.95 9.3 Q7.95 10.05 7.2 10.05 L1.2 10.05 Q0.45 10.05 0.45 9.3 Z" fill="#edf2fd" stroke="#7199e6" stroke-width="0.8"/><rect x="1.8" y="3.1" width="4.8" height="5.6" fill="#bccff4"/><path d="M5.7 0.6 L7.8 2.7 L5.7 2.7 Z" fill="#4c80dc"/></g>
<g transform="translate(180.05 395.85)"><path d="M0.45 1.2 Q0.45 0.45 1.2 0.45 L5.9 0.45 L7.95 2.5 L7.95 9.3 Q7.95 10.05 7.2 10.05 L1.2 10.05 Q0.45 10.05 0.45 9.3 Z" fill="#edf2fd" stroke="#7199e6" stroke-width="0.8"/><rect x="1.8" y="3.1" width="4.8" height="5.6" fill="#bccff4"/><path d="M5.7 0.6 L7.8 2.7 L5.7 2.7 Z" fill="#4c80dc"/></g>
</svg>
<div class="t " style="left:199.8px;top:178px">Awards</div>
<div class="t " style="left:199.8px;top:192px">Departments</div>
<div class="t " style="left:199.8px;top:207px">Grants Portal</div>
<div class="t " style="left:199.8px;top:221px">Institutions</div>
<div class="t " style="left:199.8px;top:236px">Interactive Reports</div>
<div class="t " style="left:199.8px;top:250px">Professionals</div>
<div class="t " style="left:199.8px;top:265px">Proposals</div>
<div class="t " style="left:199.8px;top:279px">Protocols</div>
<div class="t " style="left:199.8px;top:294px">Sponsor Websites</div>
<div class="t " style="left:199.8px;top:308px">Sponsored Projects Office</div>
<div class="t " style="left:199.8px;top:323px">Sponsors</div>
<div class="t " style="left:199.8px;top:337px">Subrecipients</div>
<div class="t " style="left:199.8px;top:352px">Contracts Workbench</div>
<div class="t " style="left:199.8px;top:366px">Grants Center</div>
<div class="t " style="left:199.8px;top:381px">Grants WorkCenter</div>
<div class="t " style="left:199.8px;top:395px">My Proposals</div>
<svg class="layer" width="640" height="480" viewBox="0 0 640 480">
<rect x="279.10" y="174.20" width="180.30" height="234.90" fill="#000" opacity="0.13"/><rect x="278.10" y="173.00" width="180.90" height="235.50" fill="#fff"/><path d="M278.90 408.50 V173.80 H459.00" fill="none" stroke="#9a9a9a" stroke-width="1.6"/><path d="M458.40 173.00 V408.50" stroke="#777" stroke-width="1.2"/><path d="M278.10 407.80 H459.00" stroke="#5c5c5c" stroke-width="1.4"/>
<rect x="281.2" y="185.9" width="175.5" height="14.8" fill="#f6f6f6"/>
<g transform="translate(286.10 187.20)"><path d="M0.45 1.2 Q0.45 0.45 1.2 0.45 L5.9 0.45 L7.95 2.5 L7.95 9.3 Q7.95 10.05 7.2 10.05 L1.2 10.05 Q0.45 10.05 0.45 9.3 Z" fill="#edf2fd" stroke="#7199e6" stroke-width="0.8"/><rect x="1.8" y="3.1" width="4.8" height="5.6" fill="#bccff4"/><path d="M5.7 0.6 L7.8 2.7 L5.7 2.7 Z" fill="#4c80dc"/></g>
<g transform="translate(286.10 201.69)"><path d="M0.45 1.2 Q0.45 0.45 1.2 0.45 L5.9 0.45 L7.95 2.5 L7.95 9.3 Q7.95 10.05 7.2 10.05 L1.2 10.05 Q0.45 10.05 0.45 9.3 Z" fill="#edf2fd" stroke="#7199e6" stroke-width="0.8"/><rect x="1.8" y="3.1" width="4.8" height="5.6" fill="#bccff4"/><path d="M5.7 0.6 L7.8 2.7 L5.7 2.7 Z" fill="#4c80dc"/></g>
<g transform="translate(286.10 216.18)"><path d="M0.45 1.2 Q0.45 0.45 1.2 0.45 L5.9 0.45 L7.95 2.5 L7.95 9.3 Q7.95 10.05 7.2 10.05 L1.2 10.05 Q0.45 10.05 0.45 9.3 Z" fill="#edf2fd" stroke="#7199e6" stroke-width="0.8"/><rect x="1.8" y="3.1" width="4.8" height="5.6" fill="#bccff4"/><path d="M5.7 0.6 L7.8 2.7 L5.7 2.7 Z" fill="#4c80dc"/></g>
<g transform="translate(286.10 230.67)"><path d="M0.45 1.2 Q0.45 0.45 1.2 0.45 L5.9 0.45 L7.95 2.5 L7.95 9.3 Q7.95 10.05 7.2 10.05 L1.2 10.05 Q0.45 10.05 0.45 9.3 Z" fill="#edf2fd" stroke="#7199e6" stroke-width="0.8"/><rect x="1.8" y="3.1" width="4.8" height="5.6" fill="#bccff4"/><path d="M5.7 0.6 L7.8 2.7 L5.7 2.7 Z" fill="#4c80dc"/></g>
<g transform="translate(286.10 245.16)"><path d="M0.45 1.2 Q0.45 0.45 1.2 0.45 L5.9 0.45 L7.95 2.5 L7.95 9.3 Q7.95 10.05 7.2 10.05 L1.2 10.05 Q0.45 10.05 0.45 9.3 Z" fill="#edf2fd" stroke="#7199e6" stroke-width="0.8"/><rect x="1.8" y="3.1" width="4.8" height="5.6" fill="#bccff4"/><path d="M5.7 0.6 L7.8 2.7 L5.7 2.7 Z" fill="#4c80dc"/></g>
<g transform="translate(286.10 259.65)"><path d="M0.45 1.2 Q0.45 0.45 1.2 0.45 L5.9 0.45 L7.95 2.5 L7.95 9.3 Q7.95 10.05 7.2 10.05 L1.2 10.05 Q0.45 10.05 0.45 9.3 Z" fill="#edf2fd" stroke="#7199e6" stroke-width="0.8"/><rect x="1.8" y="3.1" width="4.8" height="5.6" fill="#bccff4"/><path d="M5.7 0.6 L7.8 2.7 L5.7 2.7 Z" fill="#4c80dc"/></g>
<g transform="translate(286.10 274.14)"><path d="M0.45 1.2 Q0.45 0.45 1.2 0.45 L5.9 0.45 L7.95 2.5 L7.95 9.3 Q7.95 10.05 7.2 10.05 L1.2 10.05 Q0.45 10.05 0.45 9.3 Z" fill="#edf2fd" stroke="#7199e6" stroke-width="0.8"/><rect x="1.8" y="3.1" width="4.8" height="5.6" fill="#bccff4"/><path d="M5.7 0.6 L7.8 2.7 L5.7 2.7 Z" fill="#4c80dc"/></g>
<g transform="translate(286.10 288.63)"><path d="M0.45 1.2 Q0.45 0.45 1.2 0.45 L5.9 0.45 L7.95 2.5 L7.95 9.3 Q7.95 10.05 7.2 10.05 L1.2 10.05 Q0.45 10.05 0.45 9.3 Z" fill="#edf2fd" stroke="#7199e6" stroke-width="0.8"/><rect x="1.8" y="3.1" width="4.8" height="5.6" fill="#bccff4"/><path d="M5.7 0.6 L7.8 2.7 L5.7 2.7 Z" fill="#4c80dc"/></g>
<g transform="translate(286.10 303.12)"><path d="M0.45 1.2 Q0.45 0.45 1.2 0.45 L5.9 0.45 L7.95 2.5 L7.95 9.3 Q7.95 10.05 7.2 10.05 L1.2 10.05 Q0.45 10.05 0.45 9.3 Z" fill="#edf2fd" stroke="#7199e6" stroke-width="0.8"/><rect x="1.8" y="3.1" width="4.8" height="5.6" fill="#bccff4"/><path d="M5.7 0.6 L7.8 2.7 L5.7 2.7 Z" fill="#4c80dc"/></g>
<g transform="translate(286.10 317.61)"><path d="M0.45 1.2 Q0.45 0.45 1.2 0.45 L5.9 0.45 L7.95 2.5 L7.95 9.3 Q7.95 10.05 7.2 10.05 L1.2 10.05 Q0.45 10.05 0.45 9.3 Z" fill="#edf2fd" stroke="#7199e6" stroke-width="0.8"/><rect x="1.8" y="3.1" width="4.8" height="5.6" fill="#bccff4"/><path d="M5.7 0.6 L7.8 2.7 L5.7 2.7 Z" fill="#4c80dc"/></g>
<g transform="translate(286.10 332.10)"><path d="M0.45 1.2 Q0.45 0.45 1.2 0.45 L5.9 0.45 L7.95 2.5 L7.95 9.3 Q7.95 10.05 7.2 10.05 L1.2 10.05 Q0.45 10.05 0.45 9.3 Z" fill="#edf2fd" stroke="#7199e6" stroke-width="0.8"/><rect x="1.8" y="3.1" width="4.8" height="5.6" fill="#bccff4"/><path d="M5.7 0.6 L7.8 2.7 L5.7 2.7 Z" fill="#4c80dc"/></g>
<g transform="translate(286.10 346.59)"><path d="M0.45 1.2 Q0.45 0.45 1.2 0.45 L5.9 0.45 L7.95 2.5 L7.95 9.3 Q7.95 10.05 7.2 10.05 L1.2 10.05 Q0.45 10.05 0.45 9.3 Z" fill="#edf2fd" stroke="#7199e6" stroke-width="0.8"/><rect x="1.8" y="3.1" width="4.8" height="5.6" fill="#bccff4"/><path d="M5.7 0.6 L7.8 2.7 L5.7 2.7 Z" fill="#4c80dc"/></g>
<g transform="translate(286.10 361.08)"><path d="M0.45 1.2 Q0.45 0.45 1.2 0.45 L5.9 0.45 L7.95 2.5 L7.95 9.3 Q7.95 10.05 7.2 10.05 L1.2 10.05 Q0.45 10.05 0.45 9.3 Z" fill="#edf2fd" stroke="#7199e6" stroke-width="0.8"/><rect x="1.8" y="3.1" width="4.8" height="5.6" fill="#bccff4"/><path d="M5.7 0.6 L7.8 2.7 L5.7 2.7 Z" fill="#4c80dc"/></g>
<g transform="translate(286.10 375.57)"><path d="M0.45 1.2 Q0.45 0.45 1.2 0.45 L5.9 0.45 L7.95 2.5 L7.95 9.3 Q7.95 10.05 7.2 10.05 L1.2 10.05 Q0.45 10.05 0.45 9.3 Z" fill="#edf2fd" stroke="#7199e6" stroke-width="0.8"/><rect x="1.8" y="3.1" width="4.8" height="5.6" fill="#bccff4"/><path d="M5.7 0.6 L7.8 2.7 L5.7 2.7 Z" fill="#4c80dc"/></g>
<g transform="translate(286.10 390.06)"><path d="M0.45 1.2 Q0.45 0.45 1.2 0.45 L5.9 0.45 L7.95 2.5 L7.95 9.3 Q7.95 10.05 7.2 10.05 L1.2 10.05 Q0.45 10.05 0.45 9.3 Z" fill="#edf2fd" stroke="#7199e6" stroke-width="0.8"/><rect x="1.8" y="3.1" width="4.8" height="5.6" fill="#bccff4"/><path d="M5.7 0.6 L7.8 2.7 L5.7 2.7 Z" fill="#4c80dc"/></g>
</svg>
<div class="t " style="left:306.7px;top:187px;color:#9a5b2a;-webkit-text-stroke:0.2px #9a5b2a">Award Profile</div>
<div class="t " style="left:306.7px;top:201px">Commitment Control Errors</div>
<div class="t " style="left:306.7px;top:216px">Create Continuation</div>
<div class="t " style="left:306.7px;top:230px">FA Error Interactive Report</div>
<div class="t " style="left:306.7px;top:245px">Milestone Notification</div>
<div class="t " style="left:306.7px;top:259px">Negotiate Award</div>
<div class="t " style="left:306.7px;top:274px">Process Facilities Admin</div>
<div class="t " style="left:306.7px;top:288px">Process Milestone Notification</div>
<div class="t " style="left:306.7px;top:303px">Process Retroactive F&amp;A</div>
<div class="t " style="left:306.7px;top:317px">Project</div>
<div class="t " style="left:306.7px;top:332px">Project Activity</div>
<div class="t " style="left:306.7px;top:346px">Project Budget Inquiry</div>
<div class="t " style="left:306.7px;top:360px">Project Budgets</div>
<div class="t " style="left:306.7px;top:375px">Review Award Modifications</div>
<div class="t " style="left:306.7px;top:389px">Review Retroactive F&amp;A</div>
</body></html>
